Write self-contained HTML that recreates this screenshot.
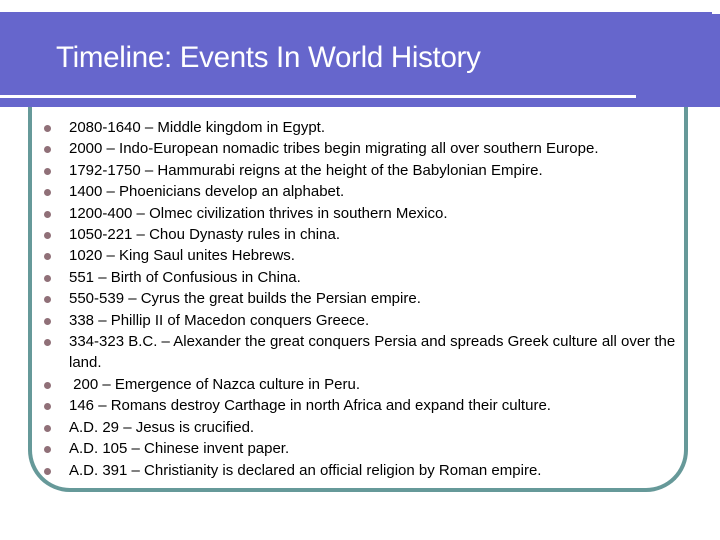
<!DOCTYPE html>
<html><head><meta charset="utf-8"><style>
html,body{margin:0;padding:0;width:720px;height:540px;background:#fff;overflow:hidden;position:relative;font-family:"Liberation Sans",Arial,sans-serif}
.hdr{position:absolute;left:0;top:12px;width:712px;height:95px;background:#6666cc}
.hdr2{position:absolute;left:700px;top:14px;width:20px;height:93px;background:#6666cc}
.wl{position:absolute;left:0;top:95px;width:636px;height:3px;background:#fff}
.title{position:absolute;left:56px;top:41px;color:#fff;font-size:29.5px;letter-spacing:-0.3px}
.box{position:absolute;left:28px;top:80px;width:652px;height:408px;border:4px solid #669999;border-top:none;border-radius:0 0 42px 42px}
.hdrz{z-index:2}
ul{position:absolute;left:0;top:117px;margin:0;padding:0;list-style:none;font-size:15px;line-height:21.4px;color:#000;z-index:3}
li{position:relative;padding-left:69px;width:612px}
li:before{content:"";position:absolute;left:44px;top:8px;width:7px;height:7px;border-radius:50%;background:#907078}
</style></head><body>
<div class="box"></div>
<div class="hdr hdrz"></div><div class="hdr2 hdrz"></div><div class="wl hdrz"></div>
<div class="title hdrz" style="z-index:3">Timeline: Events In World History</div>
<ul>
<li>2080-1640 – Middle kingdom in Egypt.</li>
<li>2000 – Indo-European nomadic tribes begin migrating all over southern Europe.</li>
<li>1792-1750 – Hammurabi reigns at the height of the Babylonian Empire.</li>
<li>1400 – Phoenicians develop an alphabet.</li>
<li>1200-400 – Olmec civilization thrives in southern Mexico.</li>
<li>1050-221 – Chou Dynasty rules in china.</li>
<li>1020 – King Saul unites Hebrews.</li>
<li>551 – Birth of Confusious in China.</li>
<li>550-539 – Cyrus the great builds the Persian empire.</li>
<li>338 – Phillip II of Macedon conquers Greece.</li>
<li>334-323 B.C. – Alexander the great conquers Persia and spreads Greek culture all over the land.</li>
<li>&nbsp;200 – Emergence of Nazca culture in Peru.</li>
<li>146 – Romans destroy Carthage in north Africa and expand their culture.</li>
<li>A.D. 29 – Jesus is crucified.</li>
<li>A.D. 105 – Chinese invent paper.</li>
<li>A.D. 391 – Christianity is declared an official religion by Roman empire.</li>
</ul>
</body></html>
